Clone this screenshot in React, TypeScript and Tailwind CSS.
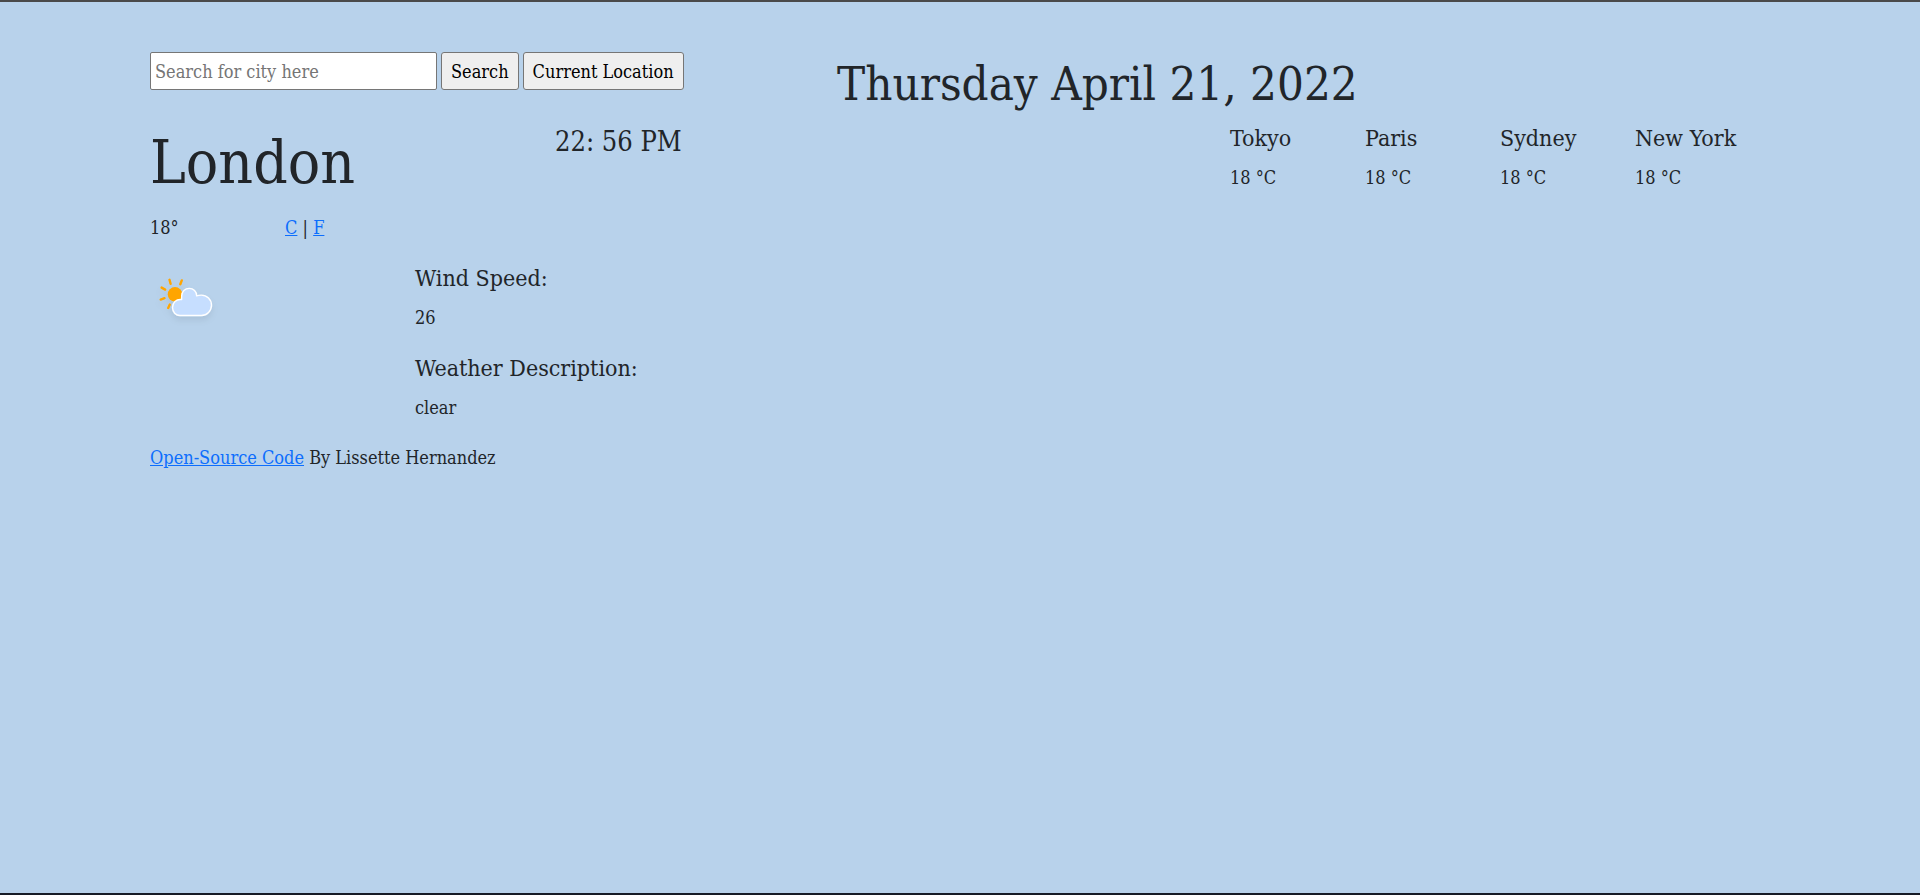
const cities = ['Tokyo', 'Paris', 'Sydney', 'New York'];

function PartlyCloudy() {
  return (
    <svg width="64" height="64" viewBox="0 0 64 64" role="img" aria-label="Partly cloudy" className="overflow-visible">
      <defs>
        <filter id="cloud-shadow" x="-30%" y="-30%" width="160%" height="180%">
          <feDropShadow dx="0" dy="4" stdDeviation="3" floodColor="#000000" floodOpacity="0.08" />
        </filter>
      </defs>
      <g filter="url(#cloud-shadow)">
        <path
          d="M19.5 15.8 L20.6 19.8 M31.8 16.4 L30.3 20.3 M11.6 23.6 L15.2 25.6 M10.7 35.6 L14.5 34.2 M19.8 40.5 L18.2 44"
          fill="none"
          stroke="orange"
          strokeWidth="2.4"
          strokeLinecap="round"
        />
        <circle cx="25" cy="30.3" r="7.3" fill="orange" />
        <path
          d="M29.9 51.5 H51.3 A10.2 10.2 0 0 0 51.3 31.1 C49.6 31.1 48.2 31.3 46.7 31.9 A7.5 7.5 0 0 0 31.7 31.8 C31.6 33.3 31.6 34.3 31.7 35.6 C26 34.8 22.5 39 22.5 43.6 C22.5 48 25.8 51.5 29.9 51.5 Z"
          fill="#c6deff"
          stroke="#ffffff"
          strokeWidth="1.4"
          strokeLinejoin="round"
        />
      </g>
    </svg>
  );
}

export default function App() {
  return (
    <div className="flex min-h-screen flex-col border-t-2 border-b-2 border-t-[#4a4a4a] border-b-[#161b26] bg-[#b8d2eb] px-[150px] pt-[50px] font-['DejaVu_Serif_Condensed','DejaVu_Serif',serif] text-[18px] leading-7 text-[#212529]">
      <div className="grid grid-cols-12">
        <main className="col-span-5">
          <form className="flex gap-1" onSubmit={(e) => e.preventDefault()}>
            <input
              type="search"
              aria-label="City"
              placeholder="Search for city here"
              className="h-[38px] w-[287px] rounded-[2px] border border-[#767676] bg-white px-1 placeholder:text-[#757575]"
            />
            <button type="submit" className="h-[38px] rounded-[3px] border border-[#767676] bg-[#efefef] px-[9px] pt-px text-black">
              Search
            </button>
            <button type="button" className="h-[38px] rounded-[3px] border border-[#767676] bg-[#efefef] px-[9px] pt-px text-black">
              Current Location
            </button>
          </form>
          <div className="mt-9 grid grid-cols-5">
            <h1 className="col-span-3 text-[60px] leading-[72px]">London</h1>
            <p className="col-span-2 text-[27px] leading-8">22: 56 PM</p>
          </div>
          <div className="mt-4 grid grid-cols-5">
            <p>18°</p>
            <p className="col-span-4">
              <a href="#celsius" className="text-[#0d6efd] underline">C</a> |{' '}
              <a href="#fahrenheit" className="text-[#0d6efd] underline">F</a>
            </p>
          </div>
          <div className="mt-[22px] flex">
            <div className="w-[265px]">
              <PartlyCloudy />
            </div>
            <dl>
              <dt className="text-[23px] leading-7">Wind Speed:</dt>
              <dd className="mt-3 mb-[22px]">26</dd>
              <dt className="text-[23px] leading-7">Weather Description:</dt>
              <dd className="mt-3">clear</dd>
            </dl>
          </div>
          <footer className="mt-[22px]">
            <a href="#source" className="text-[#0d6efd] underline">Open-Source Code</a> By Lissette Hernandez
          </footer>
        </main>
        <section className="col-span-7">
          <h2 className="pl-3 text-[47px] leading-[64px]">Thursday April 21, 2022</h2>
          <div className="mt-2 grid grid-cols-7">
            {cities.map((city) => (
              <div key={city} className="first:col-start-4">
                <h3 className="text-[23px] leading-7 whitespace-nowrap">{city}</h3>
                <p className="mt-3">18 °C</p>
              </div>
            ))}
          </div>
        </section>
      </div>
    </div>
  );
}
